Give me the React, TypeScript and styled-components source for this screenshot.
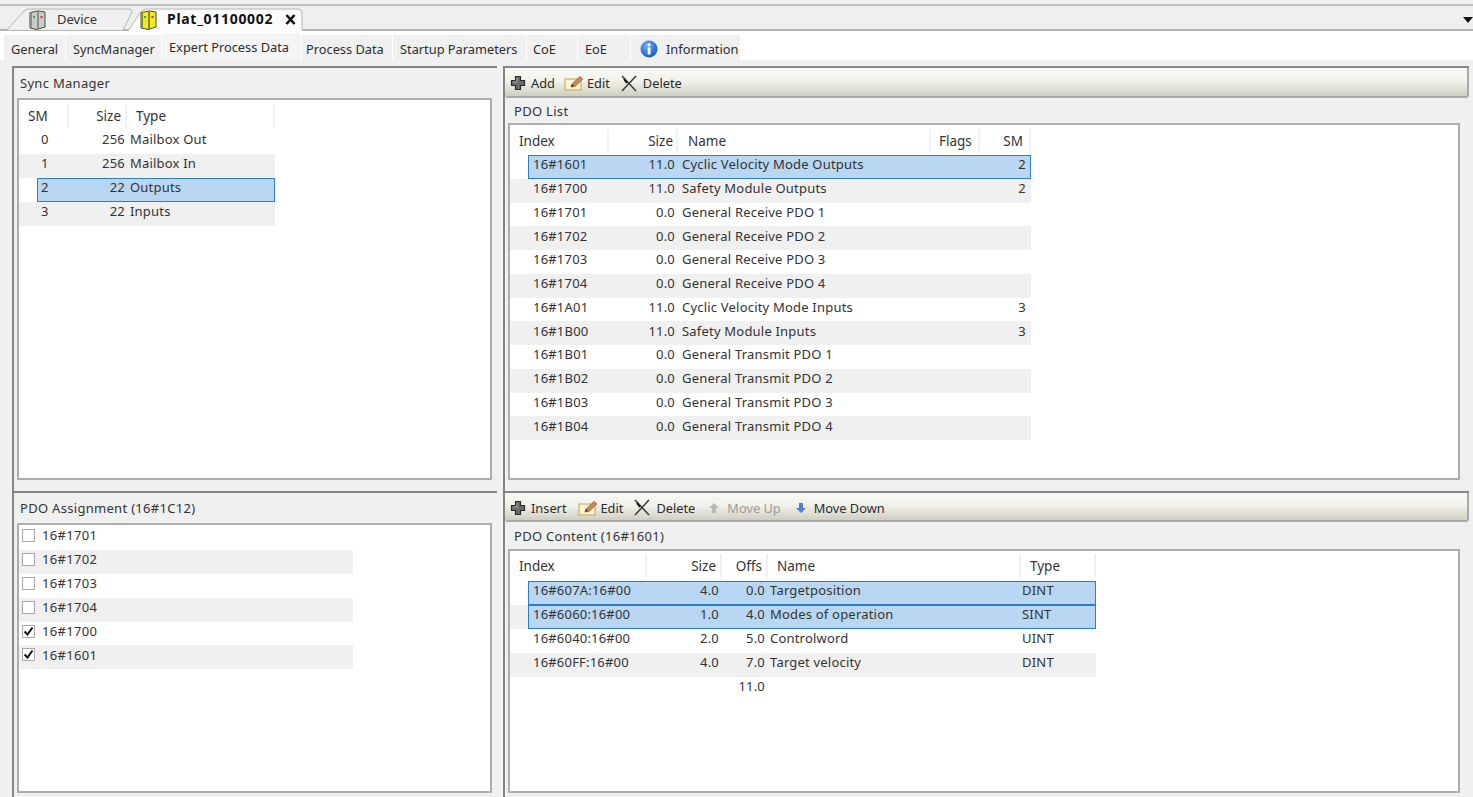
import React from "react";
import styled, { createGlobalStyle } from "styled-components";

const Global = createGlobalStyle`
  html, body { margin: 0; padding: 0; background: #f0f0f0; overflow: hidden; }
  body { font-family: "Noto Sans", "Liberation Sans", sans-serif; font-size: 13px; color: #2a2a2a; }
  #root { width: 1473px; height: 797px; }
`;

const Page = styled.div`
  width: 1473px; height: 797px; display: flex; flex-direction: column;
  background: #f0f0f0; overflow: hidden;
`;
const DocBar = styled.div`
  position: relative; margin-top: 4px; flex: none; background: #efefef;
  border-top: 2px solid #bdbdbd; border-bottom: 2px solid #b5b5b5; box-sizing: content-box;
  height: 23px;
`;
const DocTabShape = styled.svg<{ $x: number }>`
  position: absolute; left: ${p => p.$x}px; top: 0;
`;
const DocLabel = styled.span<{ $x: number; $bold?: boolean }>`
  position: absolute; left: ${p => p.$x}px; top: 4px; line-height: 18px;
  font-size: ${p => (p.$bold ? 14 : 13)}px; font-weight: ${p => (p.$bold ? 700 : 400)}; color: ${p => (p.$bold ? "#111" : "#333")};
  letter-spacing: ${p => (p.$bold ? "0.7px" : "0")};
`;
const DocIcon = styled.svg<{ $x: number }>`
  position: absolute; left: ${p => p.$x}px; top: 4px;
`;
const TabStrip = styled.div`
  height: 29px; flex: none; background: #fff; display: flex; align-items: flex-end;
  padding-left: 4px;
`;
const SubTab = styled.div<{ $w: number; $pad: number; $active?: boolean }>`
  width: ${p => p.$w}px; height: ${p => (p.$active ? 27 : 25)}px; flex: none; margin-right: 1px;
  box-sizing: border-box; padding: ${p => (p.$active ? "1px" : "3px")} 0 0 ${p => p.$pad}px;
  background: ${p => (p.$active ? "#f5f5f5" : "#f0f0f0")};
  display: flex; align-items: center; gap: 8px; font-size: 12.8px; line-height: 22px; color: #2d2d2d;
  border-radius: 2px 2px 0 0; white-space: nowrap;
`;
const Workspace = styled.div`
  flex: 1; display: grid; grid-template-columns: 485px 966px; grid-template-rows: 425px 306px;
  column-gap: 6px; padding: 6px 0 0 12px;
`;
const Panel = styled.section`
  position: relative; display: flex; flex-direction: column; box-sizing: border-box;
  border-top: 2px solid #858585; border-left: 2px solid #858585;
`;
const Toolbar = styled.div<{ $h: number }>`
  height: ${p => p.$h}px; flex: none; display: flex; align-items: center; padding: 2px 0 0 5px;
  box-sizing: border-box; font-size: 12.8px;
  background: linear-gradient(#f9f9f5, #f2f2eb 45%, #cfcfc0);
  border-bottom: 2px solid #a9a9a9;
  border-right: 2px solid #a9a9a9;
  border-radius: 0 0 3px 3px;
`;
const ToolButton = styled.span<{ $off?: boolean; $gap?: number; $after?: number }>`
  display: inline-flex; align-items: center; gap: ${p => p.$gap ?? 5}px; margin-right: ${p => p.$after ?? 10}px;
  color: ${p => (p.$off ? "#9a9a9a" : "#2c2c2c")}; white-space: nowrap;
`;
const Title = styled.div<{ $h: number; $pad: number }>`
  height: ${p => p.$h}px; flex: none; box-sizing: border-box; padding-left: ${p => p.$pad}px;
  display: flex; align-items: center; font-size: 13px; letter-spacing: .3px; color: #333;
`;
const ListBox = styled.div<{ $right: number; $bottom: number }>`
  position: relative; margin: 0 ${p => p.$right}px ${p => p.$bottom}px 3px; flex: 1; min-height: 0; box-sizing: border-box;
  background: #fff; border: 2px solid #adadad;
`;
const Table = styled.div<{ $w: number; $top: number }>`
  width: ${p => p.$w}px; margin-top: ${p => p.$top}px;
`;
const HeaderRow = styled.div<{ $cols: string; $gap: number }>`
  display: grid; grid-template-columns: ${p => p.$cols}; height: 24px; margin-bottom: ${p => p.$gap}px; align-items: stretch;
`;
const HeaderCell = styled.div<{ $right?: boolean; $pad: number }>`
  display: flex; align-items: center; justify-content: ${p => (p.$right ? "flex-end" : "flex-start")};
  ${p => (p.$right ? `padding-right: ${p.$pad}px;` : `padding-left: ${p.$pad}px;`)}
  border-right: 2px solid #f1f1f1; font-size: 13.5px; color: #333; box-sizing: border-box;
`;
const Row = styled.div<{ $cols: string; $h: number; $lift: number; $alt?: boolean; $sel?: boolean; $indent: number }>`
  position: relative; display: grid; grid-template-columns: ${p => p.$cols}; height: ${p => p.$h}px; align-items: center;
  box-sizing: border-box; padding-bottom: ${p => p.$lift}px;
  background: ${p => (p.$alt ? "#f0f0f0" : "#fff")};
  font-size: 13px; letter-spacing: .2px; color: #333; white-space: nowrap;
  ${p => p.$sel ? `&::before { content: ""; position: absolute; left: ${p.$indent}px; right: 0; top: 0; bottom: 0;
    background: #b9d7f2; border: 1.5px solid #2b7fc9; box-sizing: border-box; }` : ""}
`;
const Cell = styled.div<{ $right?: boolean; $pad: number }>`
  position: relative; text-align: ${p => (p.$right ? "right" : "left")};
  ${p => (p.$right ? `padding-right: ${p.$pad}px;` : `padding-left: ${p.$pad}px;`)}
  box-sizing: border-box;
`;
const CheckRow = styled.div<{ $alt?: boolean }>`
  position: relative; width: 334px; height: 23.9px; display: flex; align-items: center; padding: 0 0 5px 3px; gap: 7px;
  box-sizing: border-box; background: ${p => (p.$alt ? "#f0f0f0" : "transparent")};
  font-size: 13px; letter-spacing: .3px; color: #333;
`;
const CheckBox = styled.span`
  width: 13px; height: 13px; flex: none; box-sizing: border-box; background: #fff;
  border: 1px solid #a9a9a9; display: flex; align-items: center; justify-content: center;
`;
const CheckList = styled.div`
  margin-top: 1px;
`;

const Plus = () => (
  <svg width="16" height="16" viewBox="0 0 16 16">
    <path d="M5.5 1.5h5v4h4v5h-4v4h-5v-4h-4v-5h4z" fill="#6b6b6b" stroke="#2b2b2b" strokeWidth="1.2" />
    <path d="M7 3v4H3" fill="none" stroke="#a5a5a5" />
  </svg>
);
const Edit = () => (
  <svg width="21" height="16" viewBox="0 0 21 16">
    <rect x="1" y="4" width="16" height="11" fill="#fbeeb4" stroke="#bfa55f" />
    <rect x="2.5" y="5.5" width="13" height="8" fill="#fdf6d6" />
    <path d="M7 12l1-3L16 1.5l3 2.5-8 7.5z" fill="#c98a5a" stroke="#8a5a3c" strokeWidth=".7" />
    <path d="M7 12l1-3 2 2z" fill="#333" />
  </svg>
);
const Cross = () => (
  <svg width="18" height="17" viewBox="0 0 18 17">
    <path d="M2 1l14 15M16 1L2 16" fill="none" stroke="#3a3a3a" strokeWidth="1.5" />
    <path d="M4 4l3 4" stroke="#111" strokeWidth="2" />
  </svg>
);
const Up = () => (
  <svg width="14" height="12" viewBox="0 0 14 12"><path d="M7 1l5 5H9v5H5V6H2z" fill="#b9b9b9" /></svg>
);
const Down = () => (
  <svg width="14" height="12" viewBox="0 0 14 12"><path d="M5 1h4v5h3l-5 5-5-5h3z" fill="#4d7fd6" /></svg>
);
const Info = () => (
  <svg width="18" height="18" viewBox="0 0 18 18">
    <defs>
      <radialGradient id="ig" cx=".4" cy=".3" r=".8"><stop offset="0" stopColor="#6fb0f5" /><stop offset="1" stopColor="#0b4fc4" /></radialGradient>
    </defs>
    <circle cx="9" cy="9" r="8.5" fill="url(#ig)" />
    <rect x="7.7" y="7.5" width="2.8" height="7" fill="#fff" />
    <circle cx="9.1" cy="4.8" r="1.6" fill="#fff" />
  </svg>
);
const Module = ({ x, body, shade }: { x: number; body: string; shade: string }) => (
  <DocIcon $x={x} width="17" height="20" viewBox="0 0 17 20">
    <path d="M1 2.5L9 1l7 1v15l-8 2.5-7-1.5z" fill={body} stroke="#4a4a3a" />
    <rect x="8" y="2" width="2" height="17" fill={shade} />
    <rect x="1.5" y="2" width="1.5" height="16" fill={shade} />
    <rect x="4" y="6" width="2" height="2" fill="#3aa83a" />
    <rect x="11.5" y="6" width="2" height="2" fill="#cc3333" />
  </DocIcon>
);

const syncCols = "50px 58px 148px";
const sync = [["0", "256", "Mailbox Out"], ["1", "256", "Mailbox In"], ["2", "22", "Outputs"], ["3", "22", "Inputs"]];
const pdoCols = "99px 69px 253px 49px 51px";
const pdos = [
  ["16#1601", "11.0", "Cyclic Velocity Mode Outputs", "", "2"],
  ["16#1700", "11.0", "Safety Module Outputs", "", "2"],
  ["16#1701", "0.0", "General Receive PDO 1", "", ""],
  ["16#1702", "0.0", "General Receive PDO 2", "", ""],
  ["16#1703", "0.0", "General Receive PDO 3", "", ""],
  ["16#1704", "0.0", "General Receive PDO 4", "", ""],
  ["16#1A01", "11.0", "Cyclic Velocity Mode Inputs", "", "3"],
  ["16#1B00", "11.0", "Safety Module Inputs", "", "3"],
  ["16#1B01", "0.0", "General Transmit PDO 1", "", ""],
  ["16#1B02", "0.0", "General Transmit PDO 2", "", ""],
  ["16#1B03", "0.0", "General Transmit PDO 3", "", ""],
  ["16#1B04", "0.0", "General Transmit PDO 4", "", ""],
];
const contentCols = "137px 75px 46px 253px 75px";
const contents = [
  ["16#607A:16#00", "4.0", "0.0", "Targetposition", "DINT"],
  ["16#6060:16#00", "1.0", "4.0", "Modes of operation", "SINT"],
  ["16#6040:16#00", "2.0", "5.0", "Controlword", "UINT"],
  ["16#60FF:16#00", "4.0", "7.0", "Target velocity", "DINT"],
];
const assign: [string, boolean][] = [["16#1701", false], ["16#1702", false], ["16#1703", false], ["16#1704", false], ["16#1700", true], ["16#1601", true]];

export default function App() {
  return (
    <Page>
      <Global />
      <DocBar>
        <DocTabShape $x={6} width="128" height="25" viewBox="0 0 128 25">
          <path d="M1 24L18 5Q20 3 24 3H122Q127 3 126 6L117 24" fill="#f0f0f0" stroke="#b4b4b4" />
        </DocTabShape>
        <DocTabShape $x={128} width="176" height="26" viewBox="0 0 176 26">
          <path d="M0 25L12 7Q15 3 18 3H170Q174 3 174 7V25" fill="#fbfbfb" stroke="#b4b4b4" />
          <rect x="1" y="23" width="172.5" height="3" fill="#fbfbfb" />
        </DocTabShape>
        <Module x={29} body="#c9ccc8" shade="#8d908c" />
        <DocLabel $x={57}>Device</DocLabel>
        <Module x={140} body="#f4ea20" shade="#8c8a18" />
        <DocLabel $x={167} $bold>Plat_01100002</DocLabel>
        <DocIcon $x={284} width="14" height="20" viewBox="0 0 14 20">
          <path d="M2.5 5l8 9M10.5 5l-8 9" stroke="#111" strokeWidth="2.6" />
        </DocIcon>
        <DocIcon $x={1462} width="11" height="20" viewBox="0 0 11 20">
          <path d="M1 7h10l-5 6z" fill="#111" />
        </DocIcon>
      </DocBar>
      <TabStrip>
        <SubTab $w={61} $pad={7}>General</SubTab>
        <SubTab $w={95} $pad={7}>SyncManager</SubTab>
        <SubTab $w={139} $pad={7} $active>Expert Process Data</SubTab>
        <SubTab $w={90} $pad={4}>Process Data</SubTab>
        <SubTab $w={133} $pad={7}>Startup Parameters</SubTab>
        <SubTab $w={50} $pad={6}>CoE</SubTab>
        <SubTab $w={52} $pad={7}>EoE</SubTab>
        <SubTab $w={109} $pad={9}><Info />Information</SubTab>
      </TabStrip>
      <Workspace>
        <Panel>
          <Title $h={30} $pad={6}>Sync Manager</Title>
          <ListBox $right={5} $bottom={11}>
            <Table $w={256} $top={4}>
              <HeaderRow $cols={syncCols} $gap={2}>
                <HeaderCell $pad={9}>SM</HeaderCell>
                <HeaderCell $right $pad={4}>Size</HeaderCell>
                <HeaderCell $pad={9}>Type</HeaderCell>
              </HeaderRow>
              {sync.map((r, i) => (
                <Row key={r[0]} $cols={syncCols} $h={24} $lift={7} $alt={i % 2 === 1} $sel={i === 2} $indent={18}>
                  <Cell $pad={22}>{r[0]}</Cell>
                  <Cell $right $pad={2}>{r[1]}</Cell>
                  <Cell $pad={3}>{r[2]}</Cell>
                </Row>
              ))}
            </Table>
          </ListBox>
        </Panel>
        <Panel>
          <Toolbar $h={30}>
            <ToolButton $after={9}><Plus />Add</ToolButton>
            <ToolButton $gap={2}><Edit />Edit</ToolButton>
            <ToolButton><Cross />Delete</ToolButton>
          </Toolbar>
          <Title $h={25} $pad={9}>PDO List</Title>
          <ListBox $right={9} $bottom={11}>
            <Table $w={521} $top={4}>
              <HeaderRow $cols={pdoCols} $gap={2}>
                <HeaderCell $pad={9}>Index</HeaderCell>
                <HeaderCell $right $pad={3}>Size</HeaderCell>
                <HeaderCell $pad={10}>Name</HeaderCell>
                <HeaderCell $pad={8}>Flags</HeaderCell>
                <HeaderCell $right $pad={6}>SM</HeaderCell>
              </HeaderRow>
              {pdos.map((r, i) => (
                <Row key={r[0]} $cols={pdoCols} $h={23.75} $lift={5} $alt={i % 2 === 1} $sel={i === 0} $indent={18}>
                  <Cell $pad={23}>{r[0]}</Cell>
                  <Cell $right $pad={3}>{r[1]}</Cell>
                  <Cell $pad={4}>{r[2]}</Cell>
                  <Cell $pad={0}>{r[3]}</Cell>
                  <Cell $right $pad={5}>{r[4]}</Cell>
                </Row>
              ))}
            </Table>
          </ListBox>
        </Panel>
        <Panel>
          <Title $h={30} $pad={6}>PDO Assignment (16#1C12)</Title>
          <ListBox $right={5} $bottom={4}>
            <CheckList>
              {assign.map(([label, on], i) => (
                <CheckRow key={label} $alt={i % 2 === 1}>
                  <CheckBox>
                    {on && (
                      <svg width="11" height="11" viewBox="0 0 11 11">
                        <path d="M1.5 5.5l3 3 5-7" fill="none" stroke="#111" strokeWidth="2" />
                      </svg>
                    )}
                  </CheckBox>
                  {label}
                </CheckRow>
              ))}
            </CheckList>
          </ListBox>
        </Panel>
        <Panel>
          <Toolbar $h={29}>
            <ToolButton $after={11}><Plus />Insert</ToolButton>
            <ToolButton $gap={2}><Edit />Edit</ToolButton>
            <ToolButton $after={12}><Cross />Delete</ToolButton>
            <ToolButton $off $gap={6} $after={13}><Up />Move Up</ToolButton>
            <ToolButton $gap={6}><Down />Move Down</ToolButton>
          </Toolbar>
          <Title $h={27} $pad={9}>PDO Content (16#1601)</Title>
          <ListBox $right={9} $bottom={4}>
            <Table $w={586} $top={3}>
              <HeaderRow $cols={contentCols} $gap={3}>
                <HeaderCell $pad={9}>Index</HeaderCell>
                <HeaderCell $right $pad={4}>Size</HeaderCell>
                <HeaderCell $right $pad={4}>Offs</HeaderCell>
                <HeaderCell $pad={9}>Name</HeaderCell>
                <HeaderCell $pad={9}>Type</HeaderCell>
              </HeaderRow>
              {contents.map((r, i) => (
                <Row key={r[0]} $cols={contentCols} $h={23.9} $lift={7} $alt={i % 2 === 1} $sel={i < 2} $indent={18}>
                  <Cell $pad={23}>{r[0]}</Cell>
                  <Cell $right $pad={3}>{r[1]}</Cell>
                  <Cell $right $pad={3}>{r[2]}</Cell>
                  <Cell $pad={2}>{r[3]}</Cell>
                  <Cell $pad={1}>{r[4]}</Cell>
                </Row>
              ))}
              <Row $cols={contentCols} $h={23.9} $lift={7} $indent={0}>
                <Cell $pad={0} />
                <Cell $pad={0} />
                <Cell $right $pad={3}>11.0</Cell>
              </Row>
            </Table>
          </ListBox>
        </Panel>
      </Workspace>
    </Page>
  );
}
